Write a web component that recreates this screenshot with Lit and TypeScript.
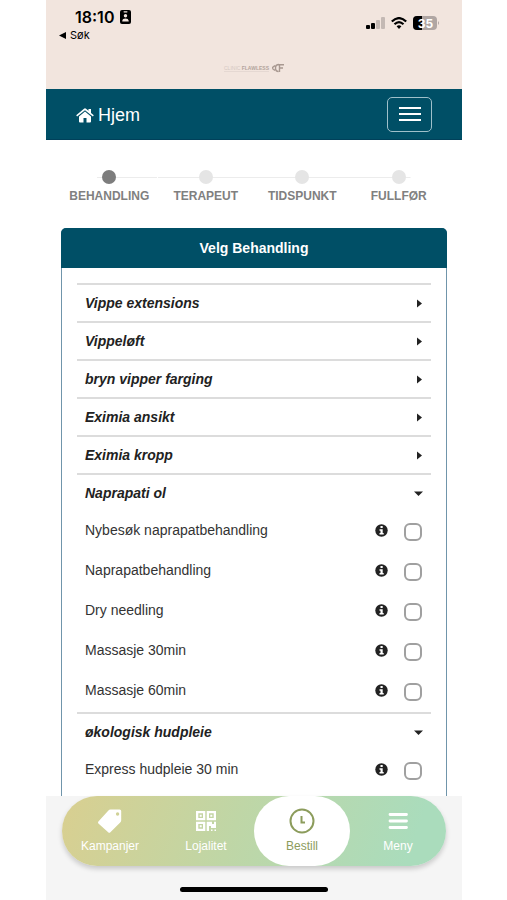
import { LitElement, html, css, svg } from "lit";
import { customElement, state } from "lit/decorators.js";
import { classMap } from "lit/directives/class-map.js";

interface Group {
  name: string;
  items: string[];
}

const GROUPS: Group[] = [
  { name: "Vippe extensions", items: [] },
  { name: "Vippeløft", items: [] },
  { name: "bryn vipper farging", items: [] },
  { name: "Eximia ansikt", items: [] },
  { name: "Eximia kropp", items: [] },
  {
    name: "Naprapati ol",
    items: [
      "Nybesøk naprapatbehandling",
      "Naprapatbehandling",
      "Dry needling",
      "Massasje 30min",
      "Massasje 60min",
    ],
  },
  { name: "økologisk hudpleie", items: ["Express hudpleie 30 min"] },
];

const STEPS = ["BEHANDLING", "TERAPEUT", "TIDSPUNKT", "FULLFØR"];

const tagIcon = svg`<path fill-rule="evenodd" fill="currentColor" d="M13.5 1.5H22.6Q24.2 1.500 24.2 3.1V12.2Q24.200 13.400 23.200 14.400L13.4 24.2Q12.3 25.200 11.200 24.200L1.4 15.6Q.6 14.600 1.400 13.600L11.200 2.700Q12.200 1.500 13.500 1.500ZM20.600 4.300a1.700 1.700 0 1 0 0 3.400 1.700 1.700 0 0 0 0-3.400Z"/>`;

const qrIcon = svg`<path fill-rule="evenodd" fill="currentColor" d="M3 3H12.3V12.3H3ZM5.3 5.300V10H10V5.300ZM13.700 3H23V12.300H13.700ZM16 5.300V10H20.700V5.300ZM3 13.700H12.300V23H3ZM5.300 16V20.700H10V16ZM6.700 6.700h2v2h-2ZM17.300 6.700h2v2h-2ZM6.700 17.300h2v2h-2ZM13.700 13.700h5.300v2.300h2v-2.300h2v6.300h-5v-2h-2v5h-2.300ZM18 21.500h1.500V23H18ZM21.500 21.500H23V23h-1.500Z"/>`;

const clockIcon = svg`<g fill="none" stroke="currentColor" stroke-width="2"><circle cx="13" cy="13" r="11.5"/><path d="M12.5 8V14.500H16"/></g>`;

const menuIcon = svg`<path fill="none" stroke="currentColor" stroke-width="2.8" stroke-linecap="round" d="M5 6.500H21.500M5 13H21.500M5 19.500H21.500"/>`;

const TABS = [
  { label: "Kampanjer", icon: tagIcon },
  { label: "Lojalitet", icon: qrIcon },
  { label: "Bestill", icon: clockIcon },
  { label: "Meny", icon: menuIcon },
];

@customElement("app-root")
export class AppRoot extends LitElement {
  @state() private open = new Set(["Naprapati ol", "økologisk hudpleie"]);

  static styles = css`
    :host {
      display: flex;
      flex-direction: column;
      height: 100vh;
      padding: 0 45px 0 46px;
      box-sizing: border-box;
      background: #fff;
      color: #333;
      font: 14px/20px "Liberation Sans", Arial, sans-serif;
    }
    * {
      box-sizing: border-box;
    }
    button {
      font: inherit;
      color: inherit;
      background: none;
      border: 0;
      padding: 0;
      cursor: pointer;
    }
    a {
      color: inherit;
      text-decoration: none;
    }
    svg {
      display: block;
      flex: none;
    }
    .top {
      flex: none;
      height: 89px;
      background: #f2e5de;
      color: #000;
      font-family: Inter, sans-serif;
    }
    .status {
      display: flex;
      justify-content: space-between;
      padding: 6px 22px 0 29px;
      height: 28px;
    }
    .time,
    .signals {
      display: flex;
      align-items: center;
      gap: 6px;
    }
    .time {
      font-size: 16px;
      font-weight: 600;
    }
    .signals {
      height: 34px;
    }
    .back {
      display: flex;
      align-items: center;
      gap: 4px;
      padding-left: 13px;
      font-size: 11px;
      line-height: 14px;
    }
    .logo {
      display: flex;
      justify-content: center;
      align-items: center;
      gap: 3px;
      height: 12px;
      margin-top: 20px;
      font: 5px/6px "Liberation Sans", Arial, sans-serif;
      color: #d5c8c2;
    }
    .logo b {
      color: #b3a49c;
    }
    .logo .name {
      border-bottom: 1px solid #e5d8d2;
    }
    .navbar {
      flex: none;
      display: flex;
      align-items: center;
      justify-content: space-between;
      height: 51px;
      padding: 0 30px;
      background: #004f66;
      color: #fff;
      border-bottom: 1px solid #00405a;
    }
    .home {
      display: flex;
      align-items: center;
      gap: 4px;
      padding-top: 2px;
      font-size: 18px;
    }
    .toggler {
      display: grid;
      place-items: center;
      width: 45px;
      height: 35px;
      border: 1px solid #9fc0ca;
      border-radius: 5px;
    }
    main {
      flex: 1;
      min-height: 0;
      overflow: hidden;
      padding: 30px 15px 0;
    }
    .steps {
      display: grid;
      grid-template-columns: repeat(4, 1fr);
      margin: 0 0 24px;
      padding: 0;
      list-style: none;
      color: #808080;
      font-size: 12px;
      font-weight: bold;
      line-height: 16px;
      text-align: center;
    }
    .step {
      display: grid;
      justify-items: center;
      row-gap: 4px;
      background: linear-gradient(#ececec, #ececec) 0 7px / 100% 1px no-repeat;
    }
    .step:first-child {
      background-position: 100% 7px;
      background-size: 62% 1px;
    }
    .step:last-child {
      background-size: 62% 1px;
    }
    .dot {
      width: 14px;
      height: 14px;
      border-radius: 50%;
      background: #e5e5e5;
    }
    .dot.current {
      background: #7d7d7d;
    }
    .card {
      border: 1px solid #7095ab;
      border-radius: 5px 5px 0 0;
      padding-bottom: 40px;
    }
    h1 {
      margin: -1px -1px 15px;
      padding: 10px;
      border-radius: 5px 5px 0 0;
      background: #004f66;
      color: #fff;
      font-size: 14px;
      line-height: 20px;
      text-align: center;
    }
    .group {
      margin: 0 15px;
      border-top: 2px solid #dcdcdc;
    }
    h2 {
      margin: 0;
      font: italic bold 14px/20px "Liberation Sans", Arial, sans-serif;
    }
    .group-toggle {
      display: flex;
      align-items: center;
      justify-content: space-between;
      width: 100%;
      height: 36px;
      padding: 0 8px;
      color: #222;
    }
    .items {
      padding-top: 1px;
    }
    .item {
      display: flex;
      align-items: center;
      height: 40px;
      padding: 0 9px 0 8px;
    }
    .item label {
      flex: 1;
      padding-bottom: 4px;
    }
    .info {
      margin: 0 16px 4px 0;
      color: #222;
    }
    input {
      appearance: none;
      flex: none;
      width: 18px;
      height: 18px;
      margin: 0;
      border: 2px solid #a0a0a0;
      border-radius: 6px;
      background: #fff;
    }
    input:checked {
      background: #004f66;
    }
    footer {
      flex: none;
      background: #f5f5f5;
      padding: 0 16px 8px;
    }
    .tabs {
      display: grid;
      grid-template-columns: repeat(4, 1fr);
      height: 70px;
      border-radius: 35px;
      background: linear-gradient(110deg, #d9cf90, #bfd6a6 45%, #aadcbc 90%);
      box-shadow: 0 3px 5px #0000002e;
      color: #fff;
      font-size: 12px;
      line-height: 16px;
    }
    .tab {
      display: flex;
      flex-direction: column;
      align-items: center;
      gap: 4px;
      padding-top: 12px;
      border-radius: 35px;
    }
    .tab.active {
      background: #fff;
      color: #8c9c5c;
    }
    .indicator {
      width: 148px;
      height: 5px;
      margin: 21px auto 0;
      border-radius: 3px;
      background: #000;
    }
  `;

  private toggle(name: string) {
    const next = new Set(this.open);
    if (!next.delete(name)) next.add(name);
    this.open = next;
  }

  private renderItem(name: string, id: string) {
    return html`
      <div class="item">
        <label for=${id}>${name}</label>
        <button class="info" aria-label="Info">
          <svg width="13" height="13" viewBox="0 0 13 13">
            <circle cx="6.5" cy="6.5" r="6.2" fill="currentColor" />
            <path fill="#fff" d="M5.500 2h2.200v2H5.500ZM4.500 5.200h3.200v3.800h1v1.500H4.500V9h1V6.700h-1Z" />
          </svg>
        </button>
        <input type="checkbox" id=${id} />
      </div>
    `;
  }

  private renderGroup(group: Group, index: number) {
    const open = this.open.has(group.name);
    return html`
      <section class="group">
        <h2>
          <button
            class="group-toggle"
            aria-expanded=${open ? "true" : "false"}
            @click=${() => this.toggle(group.name)}
          >
            ${group.name}
            <svg width="9" height="9" viewBox="0 0 9 9" fill="currentColor">
              ${open ? svg`<path d="M0 2.500H9L4.500 7Z" />` : svg`<path d="M3 .5V8.500L8 4.500Z" />`}
            </svg>
          </button>
        </h2>
        ${open
          ? html`<div class="items">
              ${group.items.map((item, i) => this.renderItem(item, `item-${index}-${i}`))}
            </div>`
          : null}
      </section>
    `;
  }

  render() {
    return html`
      <header class="top">
        <div class="status">
          <span class="time">
            18:10
            <svg width="11" height="14" viewBox="0 0 11 14">
              <rect width="11" height="14" rx="2" />
              <g fill="#f2e5de">
                <rect x="3.5" y="1.2" width="4" height="1.2" rx=".6" />
                <circle cx="5.5" cy="5.8" r="1.7" />
                <path d="M2.300 11.500V10.800Q2.600 8.500 5.500 8.500T8.700 10.800V11.500Z" />
              </g>
            </svg>
          </span>
          <span class="signals">
            <svg width="19" height="12" viewBox="0 0 19 12">
              <rect y="8" width="4" height="4" rx="1" />
              <rect x="5" y="6" width="4" height="6" rx="1" />
              <g fill="#c4b9b4">
                <rect x="10" y="3" width="4" height="9" rx="1" />
                <rect x="15" width="4" height="12" rx="1" />
              </g>
            </svg>
            <svg width="16" height="12" viewBox="0 0 16 12">
              <g fill="none" stroke="#000" stroke-width="2.2">
                <path d="M.8 4.500Q8-2.300 15.200 4.500" />
                <path d="M3.500 7.300Q8 3 12.500 7.300" />
              </g>
              <path d="M5.600 9.200Q8 7.300 10.400 9.200L8 12Z" />
            </svg>
            <svg width="27" height="14" viewBox="0 0 27 14">
              <rect width="24" height="14" rx="4" fill="#b0a6a3" />
              <path d="M4 0H9V14H4Q0 14 0 10V4Q0 0 4 0Z" />
              <path d="M25 5Q27 7 25 9Z" fill="#b0a6a3" />
              <text x="12.5" y="11.5" text-anchor="middle" fill="#fff" font-size="12" font-weight="700">35</text>
            </svg>
          </span>
        </div>
        <a class="back" href="#">
          <svg width="7" height="7" viewBox="0 0 7 7"><path d="M0 3.500L7 0V7Z" /></svg>
          Søk
        </a>
        <div class="logo">
          <span class="name">CLINIC <b>FLAWLESS</b></span>
          <svg width="12" height="10" viewBox="0 0 12 10" fill="none" stroke="#a89890" stroke-width="1.4">
            <path d="M0 5L3 2.500M0 5L3 7.500M7 1.500Q3.500 1.500 3.500 5T6.500 8.500M7.500 9V1.700H12M7.500 5H11" />
          </svg>
        </div>
      </header>

      <nav class="navbar">
        <a class="home" href="#">
          <svg width="18" height="15" viewBox="0 0 18 15" fill="currentColor">
            <path d="M9 3.600L15 8.600V13.500Q15 14.500 14 14.500H10.500V10H7.500V14.500H4Q3 14.500 3 13.500V8.600Z" />
            <path d="M9 .3Q9.600.3 10 .7L12.500 2.800V1H15V4.900L17.800 7.300L16.900 8.400L9 2.200L1.100 8.400L.2 7.300L8 .7Q8.400.3 9 .3Z" />
          </svg>
          Hjem
        </a>
        <button class="toggler" aria-label="Meny">
          <svg width="22" height="16" viewBox="0 0 22 16" fill="currentColor">
            <path d="M0 1H22V3H0ZM0 7H22V9H0ZM0 13H22V15H0Z" />
          </svg>
        </button>
      </nav>

      <main>
        <ol class="steps">
          ${STEPS.map(
            (step, i) => html`
              <li class="step">
                <span class=${classMap({ dot: true, current: i === 0 })}></span>
                ${step}
              </li>
            `
          )}
        </ol>
        <div class="card">
          <h1>Velg Behandling</h1>
          ${GROUPS.map((group, i) => this.renderGroup(group, i))}
        </div>
      </main>

      <footer>
        <nav class="tabs">
          ${TABS.map(
            (tab) => html`
              <a href="#" class=${classMap({ tab: true, active: tab.label === "Bestill" })}>
                <svg width="26" height="26" viewBox="0 0 26 26">${tab.icon}</svg>
                ${tab.label}
              </a>
            `
          )}
        </nav>
        <div class="indicator"></div>
      </footer>
    `;
  }
}
